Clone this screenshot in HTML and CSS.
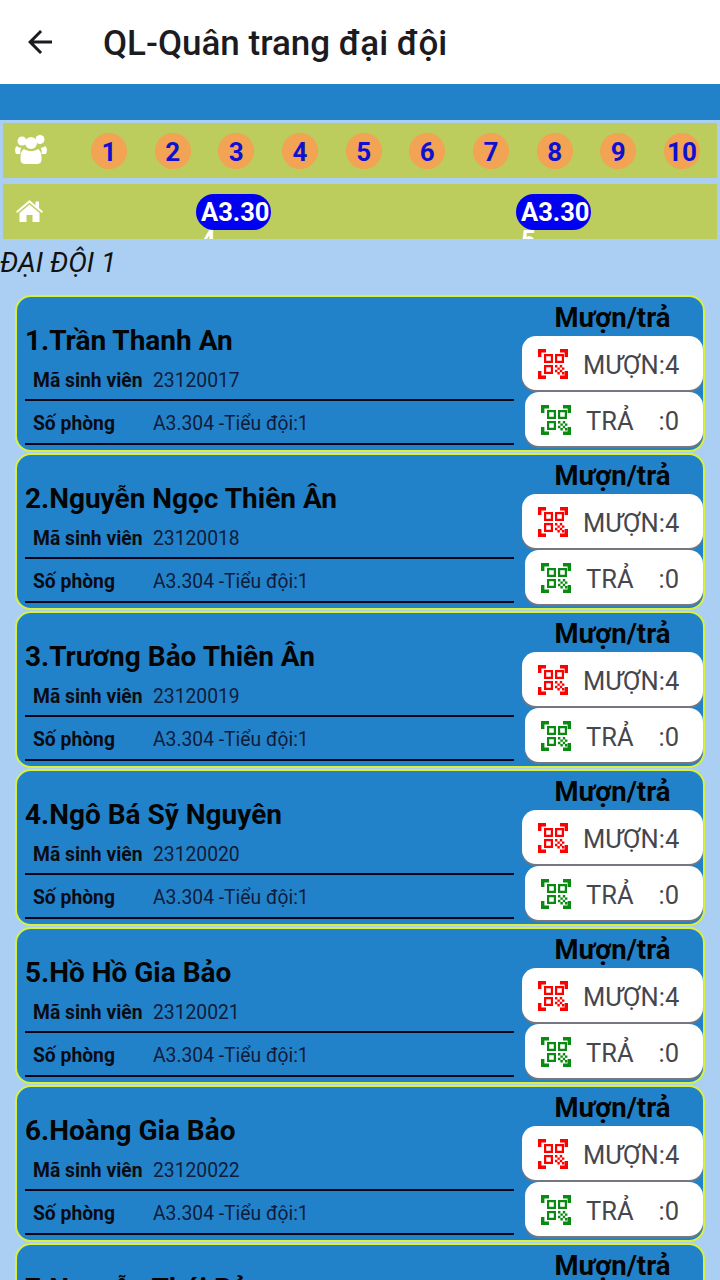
FILE: index.html
```html
<!DOCTYPE html>
<html lang="vi">
<head>
  <meta charset="UTF-8">
  <title>QL-Quân trang đại đội</title>
  <link rel="stylesheet" href="styles.css">
</head>
<body>

<svg class="defs" width="0" height="0">
  <symbol id="qr" viewBox="0 0 30 30">
    <path d="M0 8V0h8v3.400H3.400V8zM22 0h8v8h-3.400V3.400H22zM0 22h3.400v4.600H8V30H0zM26.600 22H30v8h-8v-3.400h4.600z"/>
    <path fill-rule="evenodd" d="M6 5h9v9H6zm2.200 2.200v4.600h4.600V7.200zM17 5h9v9h-9zm2.200 2.200v4.600h4.600V7.200zM6 16h9v9H6zm2.200 2.200v4.600h4.600v-4.600z"/>
    <path d="M17 16h2.400v2.400H17zM21.800 16h2.400v2.400h-2.400zM19.400 18.400h2.400v2.400h-2.400zM24 18.400h2.400v2.400H24zM17 20.800h2.400v2.400H17zM21.800 20.800h2.400v2.400h-2.400zM19.400 23h2.400v2.400h-2.400zM24 23h2.400v2.400H24z"/>
  </symbol>
</svg>

<header class="appbar">
  <svg class="back" viewBox="0 0 24 24"><path d="M20 11H7.830l5.590-5.590L12 4l-8 8 8 8 1.410-1.410L7.830 13H20v-2z"/></svg>
  <h1>QL-Quân trang đại đội</h1>
</header>

<div class="blue-bar"></div>

<div class="strip strip-numbers">
  <svg class="strip-icon" viewBox="0 0 32 30">
    <circle cx="7" cy="7" r="4.500"/>
    <circle cx="25" cy="5.500" r="4.500"/>
    <circle cx="16" cy="9" r="6"/>
    <path d="M1 20c-1.500-3-1-7 1-8 1.500 1.500 3 2 4.500 1.500-1 1.500-1.500 4-1 6.500zM31 20c1.500-3 1-7-1-8-1.500 1.500-3 2-4.500 1.500 1 1.500 1.500 4 1 6.500z"/>
    <path d="M9 15c2 1.500 4.500 2 7 2s5-.5 7-2c2 1 3.500 4 3.500 8v3c0 2.500-2 4-4.500 4H10c-2.500 0-4.500-1.500-4.500-4v-3c0-4 1.500-7 3.500-8z"/>
  </svg>
  <div class="numbers">
    <span class="num">1</span>
    <span class="num">2</span>
    <span class="num">3</span>
    <span class="num">4</span>
    <span class="num">5</span>
    <span class="num">6</span>
    <span class="num">7</span>
    <span class="num">8</span>
    <span class="num">9</span>
    <span class="num">10</span>
  </div>
</div>

<div class="strip strip-rooms">
  <svg class="strip-icon home" viewBox="0 0 27 22">
    <path d="M13.500 0L0 11.500l1.200 1.500L13.500 2.700 25.800 13l1.200-1.500-4-3.400V1.500h-3.500v3.700z"/>
    <path d="M13.500 4.500L3.500 13v9h7v-7h6v7h7v-9z"/>
  </svg>
  <span class="room room-a">A3.30<br>4</span>
  <span class="room room-b">A3.30<br>5</span>
</div>

<h2 class="company">ĐẠI ĐỘI 1</h2>

<div class="list">

  <div class="card">
    <div class="info">
      <div class="name">1.Trần Thanh An</div>
      <div class="row"><b>Mã sinh viên</b><span>23120017</span></div>
      <div class="row"><b>Số phòng</b><span>A3.304 -Tiểu đội:1</span></div>
    </div>
    <div class="actions">
      <div class="actions-title">Mượn/trả</div>
      <div class="btn btn-borrow"><svg class="qr"><use href="#qr"/></svg><span>MƯỢN:4</span></div>
      <div class="btn btn-return"><svg class="qr"><use href="#qr"/></svg><span>TRẢ</span><span class="count">:0</span></div>
    </div>
  </div>

  <div class="card">
    <div class="info">
      <div class="name">2.Nguyễn Ngọc Thiên Ân</div>
      <div class="row"><b>Mã sinh viên</b><span>23120018</span></div>
      <div class="row"><b>Số phòng</b><span>A3.304 -Tiểu đội:1</span></div>
    </div>
    <div class="actions">
      <div class="actions-title">Mượn/trả</div>
      <div class="btn btn-borrow"><svg class="qr"><use href="#qr"/></svg><span>MƯỢN:4</span></div>
      <div class="btn btn-return"><svg class="qr"><use href="#qr"/></svg><span>TRẢ</span><span class="count">:0</span></div>
    </div>
  </div>

  <div class="card">
    <div class="info">
      <div class="name">3.Trương Bảo Thiên Ân</div>
      <div class="row"><b>Mã sinh viên</b><span>23120019</span></div>
      <div class="row"><b>Số phòng</b><span>A3.304 -Tiểu đội:1</span></div>
    </div>
    <div class="actions">
      <div class="actions-title">Mượn/trả</div>
      <div class="btn btn-borrow"><svg class="qr"><use href="#qr"/></svg><span>MƯỢN:4</span></div>
      <div class="btn btn-return"><svg class="qr"><use href="#qr"/></svg><span>TRẢ</span><span class="count">:0</span></div>
    </div>
  </div>

  <div class="card">
    <div class="info">
      <div class="name">4.Ngô Bá Sỹ Nguyên</div>
      <div class="row"><b>Mã sinh viên</b><span>23120020</span></div>
      <div class="row"><b>Số phòng</b><span>A3.304 -Tiểu đội:1</span></div>
    </div>
    <div class="actions">
      <div class="actions-title">Mượn/trả</div>
      <div class="btn btn-borrow"><svg class="qr"><use href="#qr"/></svg><span>MƯỢN:4</span></div>
      <div class="btn btn-return"><svg class="qr"><use href="#qr"/></svg><span>TRẢ</span><span class="count">:0</span></div>
    </div>
  </div>

  <div class="card">
    <div class="info">
      <div class="name">5.Hồ Hồ Gia Bảo</div>
      <div class="row"><b>Mã sinh viên</b><span>23120021</span></div>
      <div class="row"><b>Số phòng</b><span>A3.304 -Tiểu đội:1</span></div>
    </div>
    <div class="actions">
      <div class="actions-title">Mượn/trả</div>
      <div class="btn btn-borrow"><svg class="qr"><use href="#qr"/></svg><span>MƯỢN:4</span></div>
      <div class="btn btn-return"><svg class="qr"><use href="#qr"/></svg><span>TRẢ</span><span class="count">:0</span></div>
    </div>
  </div>

  <div class="card">
    <div class="info">
      <div class="name">6.Hoàng Gia Bảo</div>
      <div class="row"><b>Mã sinh viên</b><span>23120022</span></div>
      <div class="row"><b>Số phòng</b><span>A3.304 -Tiểu đội:1</span></div>
    </div>
    <div class="actions">
      <div class="actions-title">Mượn/trả</div>
      <div class="btn btn-borrow"><svg class="qr"><use href="#qr"/></svg><span>MƯỢN:4</span></div>
      <div class="btn btn-return"><svg class="qr"><use href="#qr"/></svg><span>TRẢ</span><span class="count">:0</span></div>
    </div>
  </div>

  <div class="card">
    <div class="info">
      <div class="name">7.Nguyễn Thái Bảo</div>
    </div>
    <div class="actions">
      <div class="actions-title">Mượn/trả</div>
    </div>
  </div>

</div>

</body>
</html>
```

FILE: styles.css
```css
* {
  box-sizing: border-box;
  margin: 0;
  padding: 0;
  font-family: Roboto, "Liberation Sans", sans-serif;
}

body {
  width: 720px;
  height: 1280px;
  overflow: hidden;
  background: #abcff2;
}

.defs {
  position: absolute;
}

/* App bar */
.appbar {
  display: flex;
  align-items: center;
  height: 84px;
  padding-left: 22px;
  background: #fff;
}

.back {
  width: 36px;
  height: 36px;
  fill: #1c1b1f;
}

.appbar h1 {
  margin-left: 45px;
  padding-top: 2px;
  font-size: 35px;
  font-weight: 500;
  color: #1c1b1f;
}

.blue-bar {
  height: 36px;
  background: #2282c9;
}

/* Green strips */
.strip {
  display: flex;
  align-items: center;
  width: 714px;
  height: 55px;
  margin: 3px 3px 0;
  background: #bccd5d;
}

.strip-icon {
  flex: none;
  width: 32px;
  height: 30px;
  margin-left: 12px;
  margin-top: -3px;
  fill: #fff;
}

.numbers {
  display: flex;
  justify-content: space-between;
  flex: 1;
  padding: 0 17px 0 44px;
}

.num {
  display: flex;
  align-items: center;
  justify-content: center;
  width: 36px;
  height: 36px;
  padding-top: 2px;
  border-radius: 50%;
  background: #f2a353;
  color: #1010d0;
  font-size: 26px;
  font-weight: 700;
}

.strip-rooms {
  position: relative;
  margin-top: 6px;
  overflow: hidden;
}

.home {
  width: 27px;
  height: 22px;
  margin-left: 13px;
  margin-top: -1px;
}

.room {
  position: absolute;
  top: 10px;
  width: 75px;
  height: 36px;
  padding: 4px 0 0 5px;
  border-radius: 18px;
  background: #0000f0;
  color: #fff;
  font-size: 25.500px;
  font-weight: 700;
  line-height: 28px;
  white-space: nowrap;
}

.room-a {
  left: 193px;
}

.room-b {
  left: 513px;
}

.company {
  height: 56px;
  padding-top: 8px;
  font-size: 28px;
  font-style: italic;
  font-weight: 400;
  line-height: 32px;
  color: #111;
}

/* Student cards */
.list {
  display: flex;
  flex-direction: column;
  gap: 1px;
  padding: 0 15px;
}

.card {
  display: flex;
  flex: none;
  height: 157px;
  border: 2px solid #d9f03e;
  border-radius: 16px;
  background: #2282c9;
}

.info {
  width: 489px;
  margin-left: 8px;
  padding-top: 27px;
}

.name {
  height: 33px;
  font-size: 28px;
  font-weight: 700;
  line-height: 33px;
  color: #050505;
}

.row {
  display: flex;
  align-items: center;
  height: 44px;
  padding: 4px 0 0 8px;
  border-bottom: 2px solid #050518;
  font-size: 19.300px;
  color: #101c3a;
}

.row + .row {
  padding-top: 2px;
}

.row b {
  width: 120px;
  font-weight: 700;
  font-size: 19.300px;
  color: #0b0b14;
}

.actions {
  display: flex;
  flex-direction: column;
  align-items: flex-end;
  flex: 1;
  margin-left: 6px;
}

.actions-title {
  align-self: center;
  height: 39px;
  padding-left: 2px;
  font-size: 27.500px;
  font-weight: 700;
  line-height: 42px;
  color: #050505;
}

.btn {
  display: flex;
  align-items: center;
  height: 54px;
  margin-bottom: 2px;
  padding-top: 1px;
  border-radius: 14px;
  background: #fff;
  box-shadow: 0 2px 1px #77777f;
  font-size: 25.500px;
  color: #46464e;
}

.btn span {
  padding-top: 3px;
}

.btn-borrow {
  width: 181px;
  padding-left: 16px;
}

.btn-return {
  width: 178px;
  padding-left: 16px;
}

.qr {
  flex: none;
  width: 30px;
  height: 30px;
  margin-right: 15px;
}

.btn-borrow .qr {
  fill: #f00;
}

.btn-return .qr {
  fill: #0a8a10;
}

.count {
  margin-left: 25px;
}
```
